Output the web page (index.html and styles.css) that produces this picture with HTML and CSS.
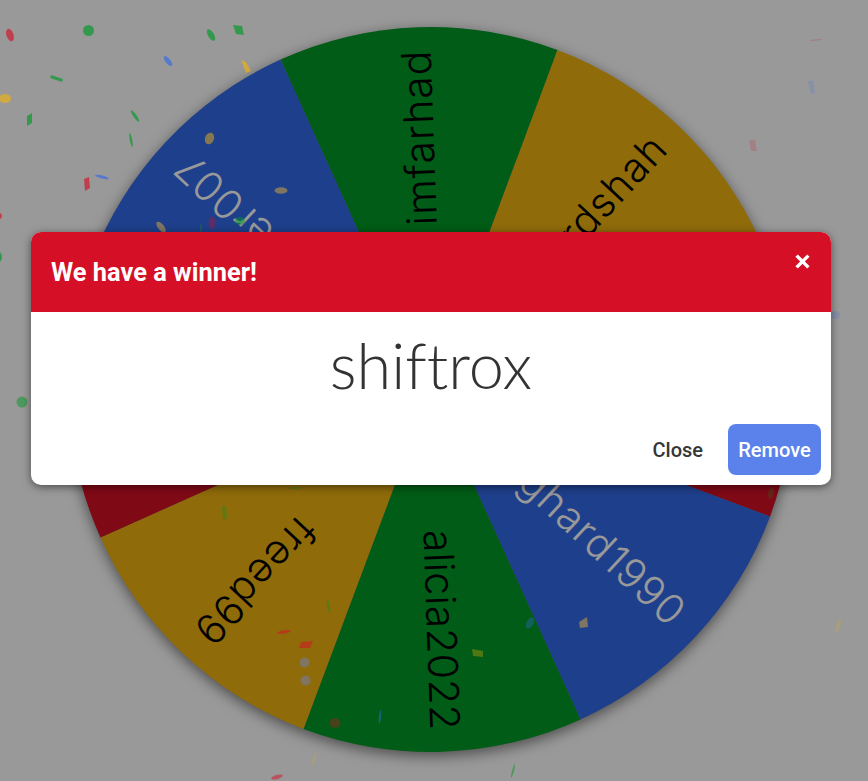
FILE: index.html
```html
<!DOCTYPE html>
<html lang="en">

<head>
    <meta charset="UTF-8">
    <meta name="viewport" content="width=device-width, initial-scale=1.0">
    <title>Wheel winner</title>
    <link rel="stylesheet" href="styles.css">
</head>

<body>
    <svg class="wheel" viewBox="0 0 868 781" width="868" height="781">
        <g transform="translate(-3.5 0)">
            <g class="wheel-disc">
                <path class="slice-green" d="M434 389.5 L284 59.6 A362.5 362.5 0 0 1 561 50 Z" />
                <path class="slice-gold" d="M434 389.5 L561 50 A362.5 362.5 0 0 1 764 241.5 Z" />
                <path class="slice-red" d="M434 389.5 L764 241.5 A362.5 362.5 0 0 1 773.6 516.5 Z" />
                <path class="slice-blue" d="M434 389.5 L773.6 516.5 A362.5 362.5 0 0 1 584 719.4 Z" />
                <path class="slice-green" d="M434 389.5 L584 719.4 A362.5 362.5 0 0 1 307 729 Z" />
                <path class="slice-gold" d="M434 389.5 L307 729 A362.5 362.5 0 0 1 104 537.5 Z" />
                <path class="slice-red" d="M434 389.5 L104 537.5 A362.5 362.5 0 0 1 94.4 262.5 Z" />
                <path class="slice-blue" d="M434 389.5 L94.4 262.5 A362.5 362.5 0 0 1 284 59.6 Z" />
            </g>
            <g class="wheel-labels">
                <text transform="rotate(-92 434 389.5)" x="774" y="386.5">imfarhad</text>
                <text transform="rotate(-47 434 389.5)" x="772" y="386.5">rdshah</text>
                <text class="label-light" transform="rotate(43 434 389.5)" x="772" y="386.5">ghard1990</text>
                <text class="label-tight" transform="rotate(88 434 389.5)" x="775" y="386.5">alicia2022</text>
                <text transform="rotate(133 434 389.5)" x="772" y="386.5">freed99</text>
                <text class="label-light" transform="rotate(-137 434 389.5)" x="772" y="386.5">er007</text>
            </g>
        </g>
    </svg>

    <div class="overlay"></div>

    <svg class="confetti" viewBox="0 0 868 781" width="868" height="781">
        <ellipse class="c-red" cx="10" cy="35" rx="3.5" ry="6.5" transform="rotate(-20 10 35)" />
        <ellipse class="c-green" cx="88.5" cy="30.5" rx="5.5" ry="5.5" />
        <ellipse class="c-green" cx="211" cy="35" rx="3" ry="6.5" transform="rotate(-30 211 35)" />
        <polygon class="c-green" points="233,25 242,26 244,35 236,34" />
        <ellipse class="c-blue" cx="168" cy="61" rx="2.5" ry="6" transform="rotate(-40 168 61)" />
        <polygon class="c-gold" points="241,60 246,62 251,71 246,73" />
        <polygon class="c-green" points="51,75 63,79 62,82 50,78" />
        <ellipse class="c-gold" cx="5" cy="98.5" rx="6" ry="4.5" />
        <polygon class="c-green" points="27,116 32,113 32,123 27,126" />
        <ellipse class="c-green" cx="135" cy="116" rx="1.6" ry="7" transform="rotate(-35 135 116)" />
        <ellipse class="c-green" cx="131" cy="140" rx="1.2" ry="7" transform="rotate(-10 131 140)" />
        <polygon class="c-red" points="84,179 89,177 90,188 85,191" />
        <ellipse class="c-blue" cx="102" cy="177" rx="7" ry="1.5" transform="rotate(15 102 177)" />
        <ellipse class="c-red" cx="-1" cy="216" rx="3" ry="3" />
        <ellipse class="c-green" cx="-1" cy="257" rx="3" ry="5" />
        <ellipse class="c-gold half" cx="209.5" cy="138.5" rx="4.5" ry="6" transform="rotate(20 209.5 138.5)" />
        <ellipse class="c-stone" cx="281" cy="190.5" rx="6.5" ry="3.2" />
        <ellipse class="c-stone" cx="161" cy="227" rx="3" ry="6.5" transform="rotate(-40 161 227)" />
        <ellipse class="c-red dim" cx="212" cy="223" rx="3.5" ry="6.5" />
        <ellipse class="c-green half" cx="240" cy="221" rx="5" ry="4" />
        <ellipse class="c-green dim" cx="201" cy="228" rx="1" ry="5" />
        <ellipse class="c-green half" cx="22" cy="402" rx="5.5" ry="5.5" />
        <ellipse class="c-blue faint" cx="835" cy="315" rx="5" ry="4" />
        <ellipse class="c-red faint" cx="816" cy="40" rx="7" ry="0.7" transform="rotate(-5 816 40)" />
        <polygon class="c-blue faint" points="808,81 813,81 815,93 811,94" />
        <polygon class="c-red faint" points="749,140 755,140 757,151 751,151" />
        <polygon class="c-green dim" points="222,506 226,506 227,518 223,520" />
        <polygon class="c-green dim" points="326,601 329,601 331,613 329,613" />
        <ellipse class="c-green dim" cx="295" cy="488" rx="6" ry="1" />
        <ellipse class="c-red half" cx="284" cy="632" rx="7" ry="1.7" transform="rotate(-10 284 632)" />
        <polygon class="c-red half" points="301,642 313,641 310,648 299,648" />
        <ellipse class="c-stone" cx="304.5" cy="662.5" rx="5" ry="5" />
        <ellipse class="c-stone" cx="305.5" cy="680.5" rx="5" ry="5" />
        <ellipse class="c-red dim" cx="335" cy="723" rx="5.5" ry="5" />
        <ellipse class="c-blue half" cx="380" cy="717" rx="1" ry="7" transform="rotate(5 380 717)" />
        <ellipse class="c-gold faint" cx="314" cy="759" rx="1.5" ry="7" transform="rotate(15 314 759)" />
        <ellipse class="c-red half" cx="277" cy="777" rx="6" ry="2" transform="rotate(-15 277 777)" />
        <ellipse class="c-blue dim" cx="530" cy="623" rx="3.5" ry="6" transform="rotate(30 530 623)" />
        <polygon class="c-stone" points="579,622 587,617 588,627 580,628" />
        <polygon class="c-gold dim" points="472,649 483,651 483,657 473,656" />
        <ellipse class="c-green half" cx="513" cy="771" rx="1" ry="7" transform="rotate(15 513 771)" />
        <ellipse class="c-gold faint" cx="838" cy="626" rx="2.5" ry="7" transform="rotate(15 838 626)" />
        <ellipse class="c-green faint" cx="771" cy="493" rx="3" ry="6" transform="rotate(10 771 493)" />
    </svg>

    <div class="modal-wrap">
        <div class="modal-card">
            <header class="modal-head">
                <h2>We have a winner!</h2>
                <button class="modal-x" aria-label="Close">
                    <svg viewBox="0 0 14 14" width="15" height="15">
                        <path d="M1.5 1.5 L12.5 12.5 M12.5 1.5 L1.5 12.5" />
                    </svg>
                </button>
            </header>
            <section class="modal-body">shiftrox</section>
            <footer class="modal-foot">
                <button class="btn-plain">Close</button>
                <button class="btn-remove">Remove</button>
            </footer>
        </div>
    </div>
</body>

</html>
```

FILE: styles.css
```css
* {
    padding: 0;
    margin: 0;
    box-sizing: border-box;
}

body {
    background-color: #fff;
    width: 868px;
    height: 781px;
    overflow: hidden;
    position: relative;
    font-family: Roboto, sans-serif;
}

.wheel,
.confetti {
    position: absolute;
    left: 0;
    top: 0;
    display: block;
}

.wheel-disc {
    filter: drop-shadow(0 4px 7px rgba(0, 0, 0, 0.5));
}

.slice-green {
    fill: #009925;
}

.slice-gold {
    fill: #eeb211;
}

.slice-red {
    fill: #d50f25;
}

.slice-blue {
    fill: #3369e8;
}

.wheel-labels text {
    font-family: Inter, sans-serif;
    font-weight: 300;
    font-size: 41px;
    letter-spacing: 1px;
    fill: #000;
    text-anchor: end;
    dominant-baseline: central;
}

.wheel-labels .label-light {
    fill: #fff;
}

.wheel-labels .label-tight {
    letter-spacing: 0.3px;
}

.overlay {
    position: absolute;
    inset: 0;
    background-color: rgba(0, 0, 0, 0.4);
}

.c-red {
    fill: #d50f25;
    opacity: 0.65;
}

.c-green {
    fill: #009925;
    opacity: 0.65;
}

.c-blue {
    fill: #3369e8;
    opacity: 0.65;
}

.c-gold {
    fill: #eeb211;
    opacity: 0.65;
}

.c-stone {
    fill: #807563;
}

.confetti .half {
    opacity: 0.5;
}

.confetti .dim {
    opacity: 0.33;
}

.confetti .faint {
    opacity: 0.18;
}

.modal-wrap {
    position: absolute;
    inset: 0;
    display: flex;
    justify-content: center;
    align-items: flex-start;
    padding: 232px 37px 0 31px;
}

.modal-card {
    width: 800px;
    height: 253px;
    background-color: #fff;
    border-radius: 10px;
    overflow: hidden;
    box-shadow: 0 2px 8px rgba(0, 0, 0, 0.5);
    display: flex;
    flex-direction: column;
}

.modal-head {
    height: 80px;
    background-color: #d50f25;
    color: #fff;
    display: flex;
    justify-content: space-between;
    padding: 0 21.5px 0 20px;
}

.modal-head h2 {
    font-size: 25.4px;
    font-weight: 700;
    line-height: 80px;
}

.modal-x {
    background: none;
    border: none;
    height: 15px;
    margin-top: 22px;
}

.modal-x svg {
    display: block;
}

.modal-x path {
    fill: none;
    stroke: #fff;
    stroke-width: 3.2;
}

.modal-body {
    flex: 1;
    text-align: center;
    font-family: Lato, sans-serif;
    font-weight: 300;
    font-size: 63px;
    font-variant-ligatures: none;
    line-height: 106px;
    color: #333;
}

.modal-foot {
    display: flex;
    justify-content: flex-end;
    align-items: center;
    padding: 0 10px 10px 0;
}

.modal-foot button {
    font-family: Roboto, sans-serif;
    font-size: 20px;
    font-weight: 500;
    border: none;
    height: 51px;
}

.btn-plain {
    background: none;
    color: #363636;
    padding: 0 25px;
}

.btn-remove {
    width: 93px;
    background-color: #5a82ea;
    color: #fff;
    border-radius: 8px;
}
```
